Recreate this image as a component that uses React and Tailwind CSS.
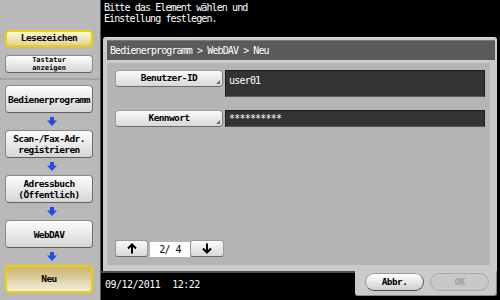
import React from "react";

const mono = "font-['DejaVu_Sans_Mono',monospace]";

function BlueArrow() {
  return (
    <div className="h-[17px] w-full flex items-center justify-center">
      <svg width="10" height="9" viewBox="0 0 10 9">
        <rect x="3" y="0" width="4" height="4" fill="#1d4fe6" />
        <polygon points="0,3.5 10,3.5 5,9" fill="#1d4fe6" />
      </svg>
    </div>
  );
}

function NavButton({ children }) {
  return (
    <div className="w-[88px] h-[28px] rounded-[4px] border border-[#8a8a8a] border-b-[#5e5e5e] border-r-[#6e6e6e] bg-gradient-to-b from-[#fdfdfd] to-[#d6d6d6] flex flex-col items-center justify-center text-[9.5px] tracking-[-0.6px] leading-[11px] font-bold text-black text-center">
      {children}
    </div>
  );
}

function FieldButton({ label }) {
  return (
    <div className="relative w-[108px] h-[17px] rounded-[4px] border border-[#9a9a9a] border-b-[#6a6a6a] border-r-[#7a7a7a] bg-gradient-to-b from-[#fbfbfb] to-[#d8d8d8] flex items-center justify-center text-[9.5px] tracking-[-0.6px] font-bold text-black">
      {label}
      <svg className="absolute right-[2px] bottom-[2px]" width="4" height="4" viewBox="0 0 4 4">
        <polygon points="4,0 4,4 0,4" fill="#6a6a6a" />
      </svg>
    </div>
  );
}

function Arrow({ up }) {
  return (
    <svg width="10" height="11" viewBox="0 0 10 11">
      {up ? (
        <path d="M5 10.5 V2 M1 5.5 L5 1.5 L9 5.5" stroke="#000" strokeWidth="2" fill="none" />
      ) : (
        <path d="M5 0.5 V9 M1 5.5 L5 9.5 L9 5.5" stroke="#000" strokeWidth="2" fill="none" />
      )}
    </svg>
  );
}

export default function App() {
  return (
    <div className={`w-[500px] h-[300px] flex bg-black overflow-hidden ${mono}`}>
      {/* left side: bookmarks and path */}
      <div className="w-[101px] h-full bg-[#b9b9b9] border-r border-[#555555] flex flex-col">
        <div className="h-[80px] border-b-2 border-[#a2a2a2] flex flex-col pl-[5px] pt-[30px] gap-[8px]">
          <div className="w-[88px] h-[17px] rounded-[4px] border-2 border-[#ecd000] bg-gradient-to-b from-[#fff9dc] to-[#e3d394] flex items-center justify-center text-[9.5px] tracking-[-0.6px] font-bold text-black">
            Lesezeichen
          </div>
          <div className="w-[88px] h-[18px] rounded-[4px] border border-[#8a8a8a] border-b-[#5e5e5e] bg-gradient-to-b from-[#fdfdfd] to-[#d6d6d6] flex flex-col items-center justify-center text-[7px] leading-[8px] font-bold text-black">
            <span>Tastatur</span>
            <span>anzeigen</span>
          </div>
        </div>
        <div className="flex flex-col pl-[5px] pt-[5px] w-[98px]">
          <NavButton>Bedienerprogramm</NavButton>
          <BlueArrow />
          <NavButton>
            <span>Scan-/Fax-Adr.</span>
            <span>registrieren</span>
          </NavButton>
          <BlueArrow />
          <NavButton>
            <span>Adressbuch</span>
            <span>(Öffentlich)</span>
          </NavButton>
          <BlueArrow />
          <NavButton>WebDAV</NavButton>
          <BlueArrow />
          <div className="w-[88px] h-[28px] rounded-[4px] border-2 border-[#ecd000] bg-gradient-to-b from-[#cbb36c] to-[#f4eedb] flex items-center justify-center text-[9.5px] tracking-[-0.6px] font-bold text-black">
            Neu
          </div>
        </div>
      </div>

      {/* right side */}
      <div className="w-[399px] h-full flex flex-col bg-black">
        <div className="h-[37px] pl-[3px] pt-[2px] text-white text-[10px] tracking-[-0.9px] leading-[11px]">
          <div>Bitte das Element wählen und</div>
          <div>Einstellung festlegen.</div>
        </div>

        <div className="ml-[2px] w-[394px] h-[234px] bg-[#cbcbcb] rounded-t-[3px] border-t border-[#dcdcdc] pt-[2px] pl-[4px] pr-[2px] flex flex-col">
          <div className="h-[20px] bg-[#5a5a5a] border-t border-[#7a7a7a] flex items-center pl-[3px] text-white text-[10px] tracking-[-0.9px]">
            Bedienerprogramm &gt; WebDAV &gt; Neu
          </div>
          <div className="mt-[3px] w-[383px] h-[202px] bg-[#b5b5b5] flex flex-col pl-[8px] pt-[7px] pb-[8px]">
            <div className="flex gap-[2px] items-start">
              <FieldButton label="Benutzer-ID" />
              <div className="w-[260px] h-[27px] bg-[#333333] border border-[#1c1c1c] border-b-[#5a5a5a] pl-[3px] pt-[2px] text-white text-[10px] tracking-[-0.8px]">
                user01
              </div>
            </div>
            <div className="flex gap-[2px] items-start mt-[13px]">
              <FieldButton label="Kennwort" />
              <div className="w-[260px] h-[17px] bg-[#333333] border border-[#1c1c1c] border-b-[#5a5a5a] pl-[3px] flex items-center text-white text-[10px] tracking-[-0.8px]">
                **********
              </div>
            </div>
            <div className="mt-auto flex items-end">
              <div className="w-[33px] h-[17px] rounded-[3px] border border-[#9a9a9a] border-b-[#6a6a6a] bg-gradient-to-b from-[#fbfbfb] to-[#d8d8d8] flex items-center justify-center">
                <Arrow up />
              </div>
              <div className="ml-[2px] w-[40px] h-[15px] bg-white flex items-center justify-center text-black text-[10px] tracking-[-0.6px]">
                2/&nbsp;4
              </div>
              <div className="w-[34px] h-[17px] rounded-[3px] border border-[#9a9a9a] border-b-[#6a6a6a] bg-gradient-to-b from-[#fbfbfb] to-[#d8d8d8] flex items-center justify-center">
                <Arrow />
              </div>
            </div>
          </div>
        </div>

        <div className="h-[29px] flex">
          <div className="w-[254px] h-full border-t-2 border-[#4d4d4d] flex pl-[4px] pt-[7px] text-white text-[10px] tracking-[-0.5px] leading-[10px]">
            <span>09/12/2011</span>
            <span className="ml-[12px]">12:22</span>
          </div>
          <div className="w-[142px] h-[25px] bg-[#cbcbcb] rounded-b-[3px] border-b border-r border-[#8a8a8a] flex gap-[6px] pl-[10px] pt-[2px]">
            <div className="w-[59px] h-[18px] rounded-full border border-[#9a9a9a] border-b-[#4e4e4e] border-r-[#5e5e5e] bg-gradient-to-b from-[#ffffff] to-[#cfcfcf] flex items-center justify-center text-[9.5px] tracking-[-0.6px] font-bold text-black">
              Abbr.
            </div>
            <div className="w-[59px] h-[18px] rounded-full border border-[#a9a9a9] bg-[#c8c8c8] flex items-center justify-center text-[9.5px] tracking-[-0.6px] font-bold text-[#a0a0a0]">
              OK
            </div>
          </div>
        </div>
      </div>
    </div>
  );
}
